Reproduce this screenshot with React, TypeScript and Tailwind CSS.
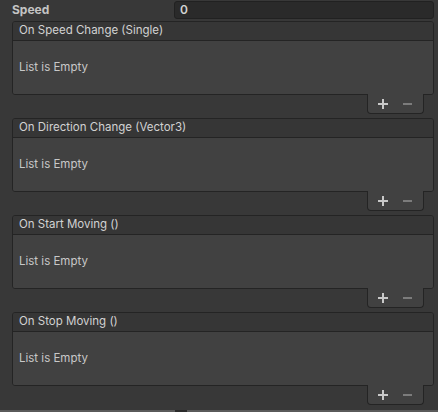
import React from 'react';

const events = [
  'On Speed Change (Single)',
  'On Direction Change (Vector3)',
  'On Start Moving ()',
  'On Stop Moving ()',
];

const PlusIcon = () => (
  <svg width="10" height="10" viewBox="0 0 10 10">
    <rect x="0" y="4" width="10" height="2" fill="#c8c8c8" />
    <rect x="4" y="0" width="2" height="10" fill="#c8c8c8" />
  </svg>
);

const MinusIcon = () => (
  <svg width="9" height="10" viewBox="0 0 9 10">
    <rect x="0" y="4" width="9" height="2" fill="#7c7c7c" />
  </svg>
);

const EventList: React.FC<{ title: string }> = ({ title }) => (
  <div className="flex flex-col">
    <div className="flex flex-col border border-[#242424] rounded-[3px] overflow-hidden">
      <div className="h-[19px] bg-[#363636] border-b border-[#242424] px-[6px] flex items-center text-[11.5px] text-[#d2d2d2]">
        {title}
      </div>
      <div className="h-[53px] bg-[#414141] px-[6px] flex items-center text-[11.5px] text-[#c8c8c8]">
        List is Empty
      </div>
    </div>
    <div className="self-end mr-[10px] -mt-px w-[57px] h-[20px] bg-[#414141] border border-t-0 border-[#242424] rounded-b-[4px] flex items-center justify-center gap-[15px] pr-[1px]">
      <PlusIcon />
      <MinusIcon />
    </div>
  </div>
);

export default function App() {
  return (
    <div
      className="w-[438px] h-[412px] bg-[#383838] flex flex-col overflow-hidden"
      style={{ fontFamily: 'Inter, "Noto Sans", sans-serif' }}
    >
      <div className="flex items-center h-[18px] mt-[1px]">
        <div className="w-[174px] pl-[12px] text-[12px] font-bold text-[#c4c4c4]">Speed</div>
        <div className="flex-1 mr-[4px] h-[18px] bg-[#2a2a2a] border border-[#212121] rounded-[3px] px-[5px] flex items-center text-[12px] font-semibold text-[#d2d2d2]">
          0
        </div>
      </div>
      <div className="flex flex-col gap-[4px] pl-[12px] pr-[4px] mt-[2px]">
        {events.map((e) => (
          <EventList key={e} title={e} />
        ))}
      </div>
      <div className="mt-auto h-[2px] bg-[#5a5a5a] flex">
        <div className="ml-[175px] w-[12px] h-[2px] bg-[#2a2a2a]" />
      </div>
    </div>
  );
}
